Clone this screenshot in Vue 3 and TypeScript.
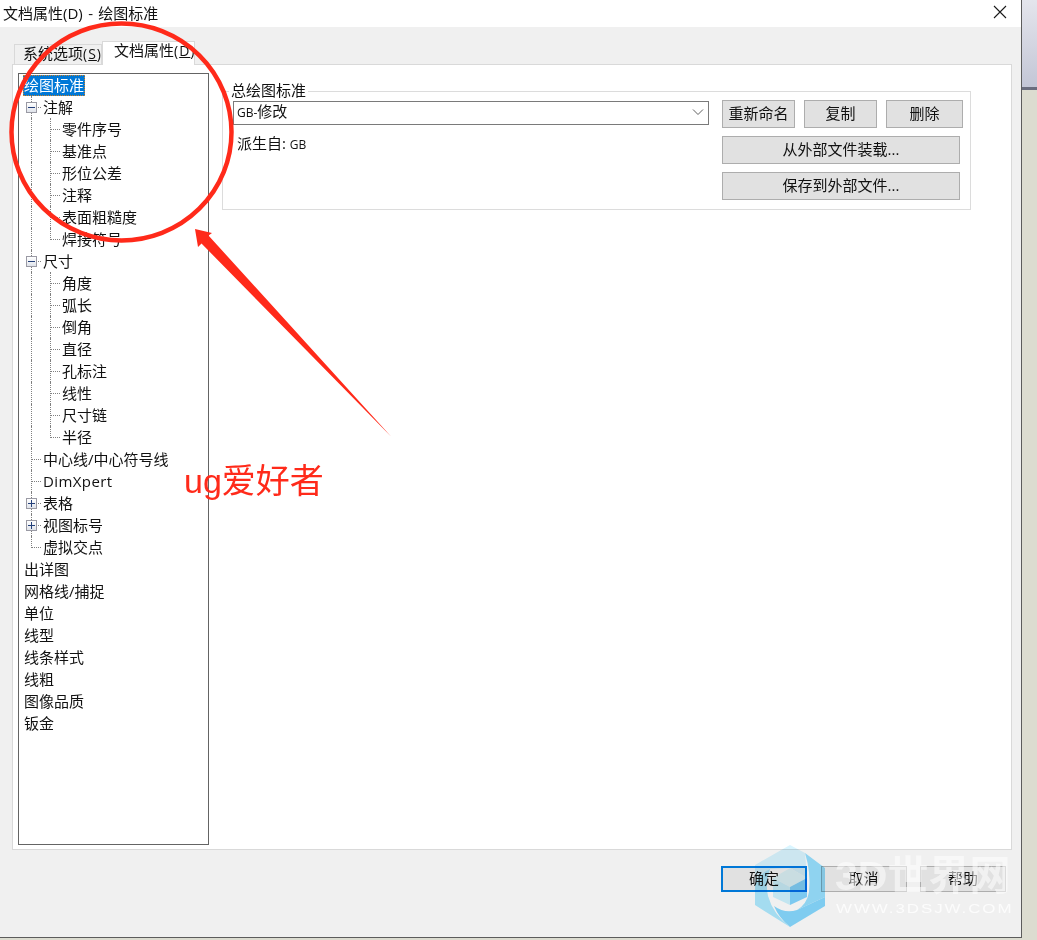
<script setup lang="ts">
interface TreeRow {
  label: string
  depth: number
  toggle?: 'minus' | 'plus'
  last?: boolean
  selected?: boolean
}

const sub = (labels: string[]): TreeRow[] =>
  labels.map((label, i) => ({ label, depth: 2, last: i === labels.length - 1 }))
const top = (labels: string[]): TreeRow[] => labels.map((label) => ({ label, depth: 0 }))

const rows: TreeRow[] = [
  { label: '绘图标准', depth: 0, selected: true },
  { label: '注解', depth: 1, toggle: 'minus' },
  ...sub(['零件序号', '基准点', '形位公差', '注释', '表面粗糙度', '焊接符号']),
  { label: '尺寸', depth: 1, toggle: 'minus' },
  ...sub(['角度', '弧长', '倒角', '直径', '孔标注', '线性', '尺寸链', '半径']),
  { label: '中心线/中心符号线', depth: 1 },
  { label: 'DimXpert', depth: 1 },
  { label: '表格', depth: 1, toggle: 'plus' },
  { label: '视图标号', depth: 1, toggle: 'plus' },
  { label: '虚拟交点', depth: 1, last: true },
  ...top(['出详图', '网格线/捕捉', '单位', '线型', '线条样式', '线粗', '图像品质', '钣金'])
]
</script>

<template>
  <div class="page">
    <div class="dialog">
      <div class="titlebar">
        <span class="title">文档属性(D) - 绘图标准</span>
        <svg class="close" width="14" height="14" viewBox="0 0 14 14">
          <path d="M1 1 L13 13 M13 1 L1 13" stroke="#1a1a1a" stroke-width="1.1" fill="none" />
        </svg>
      </div>

      <div class="tabs">
        <div class="tab">系统选项<span class="mnemonic">(<u>S</u>)</span></div>
        <div class="tab active">文档属性<span class="mnemonic">(<u>D</u>)</span></div>
      </div>

      <div class="panel">
        <div class="tree">
          <div v-for="row in rows" :key="row.label" class="row">
            <span v-if="row.depth === 2" class="guide through"></span>
            <span v-if="row.depth > 0" class="guide" :class="row.last ? 'elbow' : 'tee'">
              <span v-if="row.toggle" class="toggle" :class="row.toggle"></span>
            </span>
            <span class="label" :class="{ selected: row.selected, spaced: row.label === 'DimXpert' }">{{ row.label }}</span>
          </div>
        </div>

        <fieldset class="standard">
          <legend>总绘图标准</legend>
          <div class="standard-body">
            <div class="standard-left">
              <div class="combo">
                <span><span class="latin">GB-</span>修改</span>
                <svg width="12" height="8" viewBox="0 0 12 8">
                  <path d="M1 1.5 L6 6.5 L11 1.5" stroke="#606060" stroke-width="1" fill="none" />
                </svg>
              </div>
              <div class="derived">派生自: <span class="latin">GB</span></div>
            </div>
            <div class="standard-actions">
              <div class="action-row">
                <button class="btn w73" type="button">重新命名</button>
                <button class="btn w73" type="button">复制</button>
                <button class="btn w77" type="button">删除</button>
              </div>
              <button class="btn wide" type="button">从外部文件装载...</button>
              <button class="btn wide" type="button">保存到外部文件...</button>
            </div>
          </div>
        </fieldset>
      </div>

      <div class="footer">
        <button class="btn foot default" type="button">确定</button>
        <button class="btn foot" type="button">取消</button>
        <button class="btn foot" type="button">帮助</button>
      </div>
    </div>

    <div class="backdrop">
      <div class="backdrop-window"></div>
      <div class="backdrop-band"></div>
    </div>

    <!-- red markup drawn over the screenshot -->
    <svg class="markup" width="1037" height="940" viewBox="0 0 1037 940">
      <ellipse cx="121.5" cy="132" rx="110" ry="108.5" fill="none" stroke="#ff2a1a" stroke-width="4.5" />
      <polygon points="195,229 212,233 208.5,235.5 391.5,437 201.5,243.5 198,247" fill="#ff2a1a" />
    </svg>
    <div class="markup-text">ug爱好者</div>

    <!-- site watermark -->
    <svg class="mark-logo" width="74" height="84" viewBox="0 0 74 84">
      <path d="M37 1 L2 21 V40 Q8 28 17 25 L37 24 L54 34 L52 9 Z" fill="#d9f5ff" />
      <path d="M52 9 L72 24 V53 L44 66 Q54 60 56 48 Q58 28 52 9 Z" fill="#98e1ff" />
      <path d="M72 53 V62 L37 83 Q26 74 21 62 Q32 70 44 66 Z" fill="#87d9ff" />
      <path d="M2 40 Q8 28 17 25 Q12 40 15 52 Q20 70 37 83 L2 61 Z" fill="#aeeaff" />
      <path d="M37 24 L54 34 L37 43 L20 34 Z" fill="#e4fbff" />
      <path d="M20 34 L37 43 V61 L20 53 Z" fill="#cef4ff" />
      <path d="M54 34 L37 43 V61 L54 53 Z" fill="#84d6ff" />
    </svg>
    <div class="mark-title">3D世界网</div>
    <div class="mark-url">WWW.3DSJW.COM</div>
  </div>
</template>

<style scoped>
.page {
  position: relative;
  display: flex;
  width: 1037px;
  height: 940px;
  overflow: hidden;
  background: #dcdcd0;
  font-family: "Open Sans", "Noto Sans CJK SC", sans-serif;
  font-size: 15px;
  color: #111;
}
.dialog {
  flex: none;
  width: 1022px;
  height: 938px;
  box-sizing: border-box;
  background: #f0f0f0;
  border-right: 1px solid #5c5c5c;
  border-bottom: 1px solid #5c5c5c;
}
.titlebar {
  display: flex;
  justify-content: space-between;
  align-items: center;
  height: 27px;
  padding: 0 14px 3px 3px;
  box-sizing: border-box;
  background: #fff;
}
.title {
  word-spacing: 1.5px;
}
.close {
  display: block;
}
.tabs {
  display: flex;
  align-items: flex-end;
  height: 37px;
  padding-left: 14px;
}
.tab {
  height: 20px;
  width: 88px;
  padding-left: 8px;
  box-sizing: border-box;
  border: 1px solid #d9d9d9;
  border-bottom: none;
  background: #f0f0f0;
  line-height: 17px;
  white-space: nowrap;
}
.tab.active {
  position: relative;
  width: 93px;
  height: 24px;
  margin-bottom: -1px;
  padding-left: 11px;
  line-height: 17px;
  background: #fff;
}
.mnemonic {
  font-size: 14px;
  letter-spacing: 1px;
}
.panel {
  display: flex;
  gap: 13px;
  width: 1000px;
  height: 786px;
  margin-left: 12px;
  padding: 8px 5px 4px;
  box-sizing: border-box;
  background: #fff;
  border: 1px solid #d9d9d9;
}
.tree {
  flex: none;
  width: 191px;
  box-sizing: border-box;
  padding-left: 3px;
  border: 1px solid #646464;
}
.row {
  display: flex;
  height: 22px;
  line-height: 22px;
  white-space: nowrap;
}
.guide {
  position: relative;
  flex: none;
  width: 19px;
  height: 22px;
}
.guide::before {
  content: '';
  position: absolute;
  left: 9px;
  top: 0;
  bottom: 0;
  border-left: 1px dotted #808080;
}
.guide.elbow::before {
  bottom: 10px;
}
.tee::after,
.elbow::after {
  content: '';
  position: absolute;
  left: 10px;
  top: 11px;
  width: 9px;
  border-top: 1px dotted #808080;
}
.toggle {
  position: absolute;
  z-index: 1;
  left: 4px;
  top: 6px;
  width: 11px;
  height: 11px;
  box-sizing: border-box;
  border: 1px solid #9a9aa4;
  background: linear-gradient(#fff, #dfe3ea);
}
.toggle::before {
  content: '';
  position: absolute;
  left: 1px;
  right: 1px;
  top: 4px;
  height: 1px;
  background: #24407a;
}
.toggle.plus::after {
  content: '';
  position: absolute;
  top: 1px;
  bottom: 1px;
  left: 4px;
  width: 1px;
  background: #24407a;
}
.label {
  margin-left: 2px;
}
.label.spaced {
  letter-spacing: 0.4px;
}
.label.selected {
  height: 21px;
  margin: 1px 0 0 1px;
  padding: 0 1px;
  line-height: 20px;
  color: #fff;
  background: #0078d7;
  outline: 1px dotted #c9822a;
  outline-offset: -1px;
}
.standard {
  flex: none;
  width: 749px;
  height: 128px;
  margin: 9px 0 0;
  padding: 0 0 0 10px;
  box-sizing: border-box;
  border: 1px solid #dcdcdc;
  min-width: 0;
}
.standard legend {
  margin-left: -4px;
  padding: 0 2px;
  line-height: 16px;
  height: 18px;
}
.standard-body {
  display: flex;
  gap: 13px;
}
.standard-left {
  flex: none;
  width: 476px;
  padding-top: 1px;
}
.combo {
  display: flex;
  justify-content: space-between;
  align-items: center;
  height: 24px;
  padding: 0 4px 2px 3px;
  box-sizing: border-box;
  border: 1px solid #7a7a7a;
  line-height: 20px;
}
.latin {
  font-size: 12px;
}
.derived {
  margin-top: 8px;
  padding-left: 4px;
  line-height: 20px;
}
.standard-actions {
  display: flex;
  flex-direction: column;
  gap: 8px;
  width: 241px;
}
.action-row {
  display: flex;
  gap: 9px;
}
.btn {
  height: 28px;
  padding: 0 0 3px;
  box-sizing: border-box;
  border: 1px solid #adadad;
  background: #e1e1e1;
  font: inherit;
  color: #111;
}
.w73 {
  width: 73px;
}
.w77 {
  width: 77px;
}
.wide {
  width: 238px;
}
.footer {
  display: flex;
  justify-content: flex-end;
  gap: 13.5px;
  padding: 16px 15px 0 0;
}
.foot {
  width: 86px;
  height: 26px;
  padding-bottom: 2px;
  line-height: 20px;
}
.default {
  border: 2px solid #0078d7;
}
.backdrop {
  flex: 1;
  display: flex;
  flex-direction: column;
}
.backdrop-window {
  height: 87px;
  background: linear-gradient(#e4e5ec, #c3c6d6);
}
.backdrop-band {
  height: 3px;
  background: #6a6d7e;
}
.markup {
  position: absolute;
  left: 0;
  top: 0;
  pointer-events: none;
}
.markup-text {
  position: absolute;
  left: 184px;
  top: 458px;
  font-family: "Liberation Sans", "Noto Sans CJK SC", sans-serif;
  font-size: 34px;
  line-height: 46px;
  color: #ff2a1a;
  white-space: nowrap;
}
.mark-logo {
  position: absolute;
  left: 753px;
  top: 844px;
  mix-blend-mode: multiply;
}
.mark-title {
  position: absolute;
  left: 835px;
  top: 853px;
  font-family: "Liberation Sans", "Noto Sans CJK SC", sans-serif;
  font-size: 41px;
  line-height: 46px;
  font-weight: 700;
  color: #fff;
  opacity: 0.55;
  white-space: nowrap;
}
.mark-url {
  position: absolute;
  left: 836px;
  top: 901px;
  font-family: "Liberation Sans", sans-serif;
  font-size: 13px;
  line-height: 16px;
  letter-spacing: 1.5px;
  color: #fff;
  opacity: 0.8;
  white-space: nowrap;
  transform: scaleX(1.3);
  transform-origin: left center;
}
</style>
